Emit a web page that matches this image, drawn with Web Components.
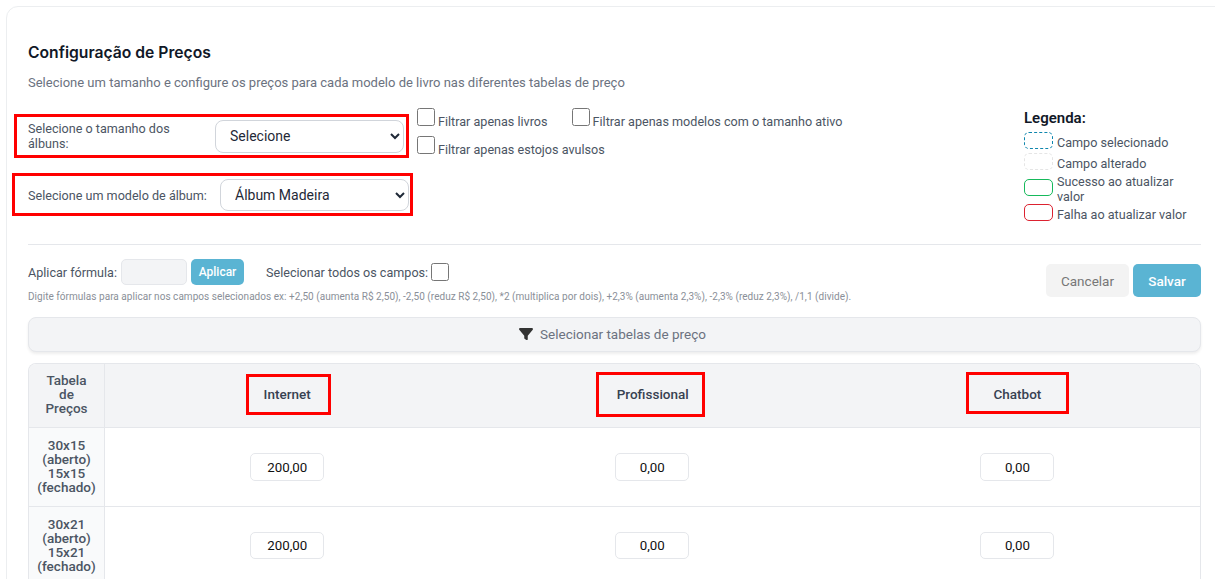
<!DOCTYPE html>
<html lang="pt-BR">
<head>
<meta charset="utf-8">
<title>Configuração de Preços</title>
<style>
html, body { margin: 0; height: 579px; overflow: hidden; background: #fff; }
body { font-family: Roboto, "Liberation Sans", sans-serif; color: #374151; }
</style>
</head>
<body>
<price-config></price-config>
<script>
class SelectRow extends HTMLElement {
    connectedCallback() {
        const root = this.shadowRoot || this.attachShadow({ mode: 'open' });
        root.innerHTML = `<style>
        :host { display: flex; align-items: center; box-sizing: border-box; border: 3px solid #f00; }
        :host(.two) label { padding-top: 2px; }
        label { box-sizing: border-box; padding-right: 20px; font-size: 12.6px; line-height: 15px; color: #4b5563; flex: none; }
        :host(.two) label { padding-right: 0; }
        select {
            font: 14px Roboto, sans-serif;
            color: #1f2937;
            background: #fff;
            border: 1px solid #d1d5db;
            border-radius: 8px;
            padding: 0 10px;
            flex: none;
        }
        </style>
        <label><slot></slot></label>
        <select><option>${this.getAttribute('value')}</option></select>`;
        root.querySelector('label').style.width = this.getAttribute('label-width');
        const sel = root.querySelector('select');
        sel.style.width = this.getAttribute('select-width');
        sel.style.height = this.getAttribute('select-height');
    }
}

class FilterCheck extends HTMLElement {
    connectedCallback() {
        const root = this.shadowRoot || this.attachShadow({ mode: 'open' });
        root.innerHTML = `<style>
        :host { display: inline-flex; align-items: flex-end; font-size: 12.6px; color: #4b5563; height: 22px; }
        input { width: 18px; height: 18px; margin: 0 3px 3px 0; flex: none; }
        span { line-height: 15px; }
        </style>
        <input type="checkbox"><span><slot></slot></span>`;
    }
}

class LegendItem extends HTMLElement {
    connectedCallback() {
        const root = this.shadowRoot || this.attachShadow({ mode: 'open' });
        const kind = this.getAttribute('kind');
        root.innerHTML = `<style>
        :host { display: flex; align-items: center; gap: 4px; font-size: 12.6px; line-height: 15px; color: #4b5563; }
        i { flex: none; width: 27px; height: 15px; margin-bottom: 3px; border-radius: 5px; }
        .selected { border: 1px dashed #0e86ad; }
        .changed { border: 1px dashed #e5e5e5; }
        .ok { border: 1px solid #16b95b; }
        .fail { border: 1px solid #dc2230; }
        span { display: block; width: 132px; }
        </style>
        <i class="${kind}"></i><span><slot></slot></span>`;
    }
}

class PriceInput extends HTMLElement {
    connectedCallback() {
        const root = this.shadowRoot || this.attachShadow({ mode: 'open' });
        root.innerHTML = `<style>
        :host { display: block; width: 74px; margin: 0 auto; }
        input {
            display: block;
            box-sizing: border-box;
            width: 74px;
            height: var(--input-height, 28px);
            border: 1px solid #e5e7eb;
            border-radius: 5px;
            background: #fff;
            text-align: center;
            font: 13.3px Roboto, sans-serif;
            color: #111;
            padding: 0;
        }
        </style>
        <input type="text" value="${this.getAttribute('value')}">`;
    }
}

class PriceTable extends HTMLElement {
    connectedCallback() {
        const root = this.shadowRoot || this.attachShadow({ mode: 'open' });
        const rows = [
            ['30x15', '15x15', '200,00'],
            ['30x21', '15x21', '200,00']
        ];
        const body = rows.map(r => `<tr>
            <th class="size">${r[0]}<br>(aberto)<br>${r[1]}<br>(fechado)</th>
            <td><price-input value="${r[2]}"></price-input></td>
            <td><price-input value="0,00"></price-input></td>
            <td><price-input value="0,00"></price-input></td>
        </tr>`).join('');
        root.innerHTML = `<style>
        :host { display: block; border: 1px solid #e5e7eb; border-bottom: 0; border-radius: 8px 8px 0 0; overflow: hidden; }
        table { width: 100%; border-collapse: collapse; table-layout: fixed; font-size: 13.5px; line-height: 14px; color: #4b5563; }
        thead th { height: 60px; background: #f3f4f6; font-weight: 500; padding: 0 0 3px; }
        th.first { width: 75px; border-right: 1px solid #e5e7eb; }
        th.size { background: #f9fafb; border-right: 1px solid #e5e7eb; font-weight: 500; padding: 10px 0 12px; }
        tr { border-bottom: 1px solid #e5e7eb; }
        td { text-align: center; padding: 0; }
        tbody tr:nth-child(2) td { padding-bottom: 1px; --input-height: 27px; }
        mark { display: block; box-sizing: border-box; background: none; color: #374151; border: 3px solid #f00; font-weight: 500; }
        .internet { width: 85px; height: 41px; line-height: 35px; padding-right: 2px; margin-left: calc(50% - 41.7px); }
        .prof { width: 109px; height: 45px; line-height: 39px; padding-left: 4px; margin-left: calc(50% - 56px); }
        .chat { width: 103px; height: 42px; line-height: 38px; margin: 0 0 3px calc(50% - 51.5px); }
        </style>
        <table>
            <thead><tr>
                <th class="first">Tabela<br>de<br>Preços</th>
                <th><mark class="internet">Internet</mark></th>
                <th><mark class="prof">Profissional</mark></th>
                <th><mark class="chat">Chatbot</mark></th>
            </tr></thead>
            <tbody>${body}</tbody>
        </table>`;
    }
}

class PriceConfig extends HTMLElement {
    connectedCallback() {
        const root = this.shadowRoot || this.attachShadow({ mode: 'open' });
        root.innerHTML = `<style>
        :host {
            display: block;
            box-sizing: border-box;
            width: 1230px;
            height: 640px;
            margin: 6px 0 0 6px;
            padding: 37px 29px 0 21px;
            border: 1px solid #eceef0;
            border-radius: 12px;
            font-family: Roboto, sans-serif;
        }
        .wrap { width: 1173px; }
        h2 { margin: 0; font: 600 15.7px/18px Inter, sans-serif; color: #111827; }
        .sub { margin: 13px 0 0; font-size: 13px; line-height: 16px; color: #6b7280; }
        .top { display: flex; margin-top: 23px; height: 121px; }
        .selects { width: 389px; flex: none; }
        select-row.one { width: 395px; height: 44px; margin: 0 0 0 -14px; padding-left: 11px; }
        select-row.two { width: 401px; height: 43px; margin: 15px 0 0 -16px; padding-left: 13px; }
        .filters { width: 607px; flex: none; display: flex; flex-wrap: wrap; align-content: flex-start; gap: 6px 24px; margin-top: -7px; }
        .filters filter-check.br { margin-right: 400px; }
        .legend { flex: none; width: 177px; margin-top: -7px; }
        .legend h3 { margin: 0 0 3px; font: 600 15px/22px Roboto, sans-serif; color: #111827; }
        .legend legend-item { margin-top: 1px; }
        .legend legend-item.last { margin-top: 0; }
        hr { margin: 9px 0 0; border: 0; border-top: 1px solid #e5e7eb; }
        .tools { display: flex; justify-content: space-between; }
        .formula { display: flex; align-items: center; margin-top: 14px; height: 26px; font-size: 12.6px; color: #4b5563; }
        .formula .field { box-sizing: border-box; width: 66px; height: 26px; margin: 0 4px 0 4px; background: #f3f4f6; border: 1px solid #e5e7eb; border-radius: 5px; }
        .btn { border: 0; font: 500 12px Roboto, sans-serif; color: #fff; background: #5ab4d3; border-radius: 5px; padding: 0; }
        .apply { width: 53px; height: 26px; margin-right: 22px; }
        .formula input { width: 18px; height: 18px; margin: 0 0 0 3px; }
        .hint { margin: 6px 0 0; font-size: 10px; line-height: 12px; color: #8a8f98; letter-spacing: .035px; }
        .actions { display: flex; gap: 4px; margin-top: 19px; }
        .actions button { height: 33px; border: 0; border-radius: 5px; font: 13.5px Roboto, sans-serif; padding: 0; }
        .cancel { width: 83px; background: #f3f3f3; color: #777; }
        .save { width: 68px; background: #5ab4d3; color: #fff; font-weight: 500 !important; }
        .bar {
            display: flex; align-items: center; justify-content: center; gap: 7px;
            box-sizing: border-box; height: 35px; margin-top: 14px; padding: 0 4px 2px 0;
            background: #f3f4f6; border: 1px solid #e5e7eb; border-radius: 8px;
            box-shadow: 0 2px 3px rgba(0,0,0,.07);
            font-size: 13.5px; color: #6b7280;
        }
        .bar svg { width: 14px; height: 14px; fill: #333; }
        price-table { margin-top: 11px; }
        </style>
        <div class="wrap">
            <h2>Configuração de Preços</h2>
            <p class="sub">Selecione um tamanho e configure os preços para cada modelo de livro nas diferentes tabelas de preço</p>
            <div class="top">
                <div class="selects">
                    <select-row class="one" value="Selecione" label-width="187px" select-width="189px" select-height="33px">Selecione o tamanho dos álbuns:</select-row>
                    <select-row class="two" value="Álbum Madeira" label-width="192px" select-width="189px" select-height="32px">Selecione um modelo de álbum:</select-row>
                </div>
                <div class="filters">
                    <filter-check>Filtrar apenas livros</filter-check>
                    <filter-check>Filtrar apenas modelos com o tamanho ativo</filter-check>
                    <filter-check class="br">Filtrar apenas estojos avulsos</filter-check>
                </div>
                <div class="legend">
                    <h3>Legenda:</h3>
                    <legend-item kind="selected">Campo selecionado</legend-item>
                    <legend-item kind="changed">Campo alterado</legend-item>
                    <legend-item kind="ok">Sucesso ao atualizar valor</legend-item>
                    <legend-item kind="fail" class="last">Falha ao atualizar valor</legend-item>
                </div>
            </div>
            <hr>
            <div class="tools">
                <div>
                    <div class="formula">
                        <span>Aplicar fórmula:</span>
                        <span class="field"></span>
                        <button class="btn apply">Aplicar</button>
                        <span>Selecionar todos os campos:</span>
                        <input type="checkbox">
                    </div>
                    <p class="hint">Digite fórmulas para aplicar nos campos selecionados ex: +2,50 (aumenta R$ 2,50), -2,50 (reduz R$ 2,50), *2 (multiplica por dois), +2,3% (aumenta 2,3%), -2,3% (reduz 2,3%), /1,1 (divide).</p>
                </div>
                <div class="actions">
                    <button class="cancel">Cancelar</button>
                    <button class="save">Salvar</button>
                </div>
            </div>
            <div class="bar">
                <svg viewBox="0 0 512 512"><path d="M3.9 54.9C10.5 40.9 24.5 32 40 32h432c15.5 0 29.5 8.9 36.1 22.9s4.6 30.5-5.2 42.5L320 320.9V448c0 12.1-6.8 23.2-17.7 28.6s-23.8 4.3-33.5-3l-64-48c-8.1-6-12.8-15.5-12.8-25.6v-79.1L9 97.3C-.7 85.4-2.8 68.8 3.9 54.9z"/></svg>
                <span>Selecionar tabelas de preço</span>
            </div>
            <price-table></price-table>
        </div>`;
    }
}

customElements.define('select-row', SelectRow);
customElements.define('filter-check', FilterCheck);
customElements.define('legend-item', LegendItem);
customElements.define('price-input', PriceInput);
customElements.define('price-table', PriceTable);
customElements.define('price-config', PriceConfig);
</script>
</body>
</html>
